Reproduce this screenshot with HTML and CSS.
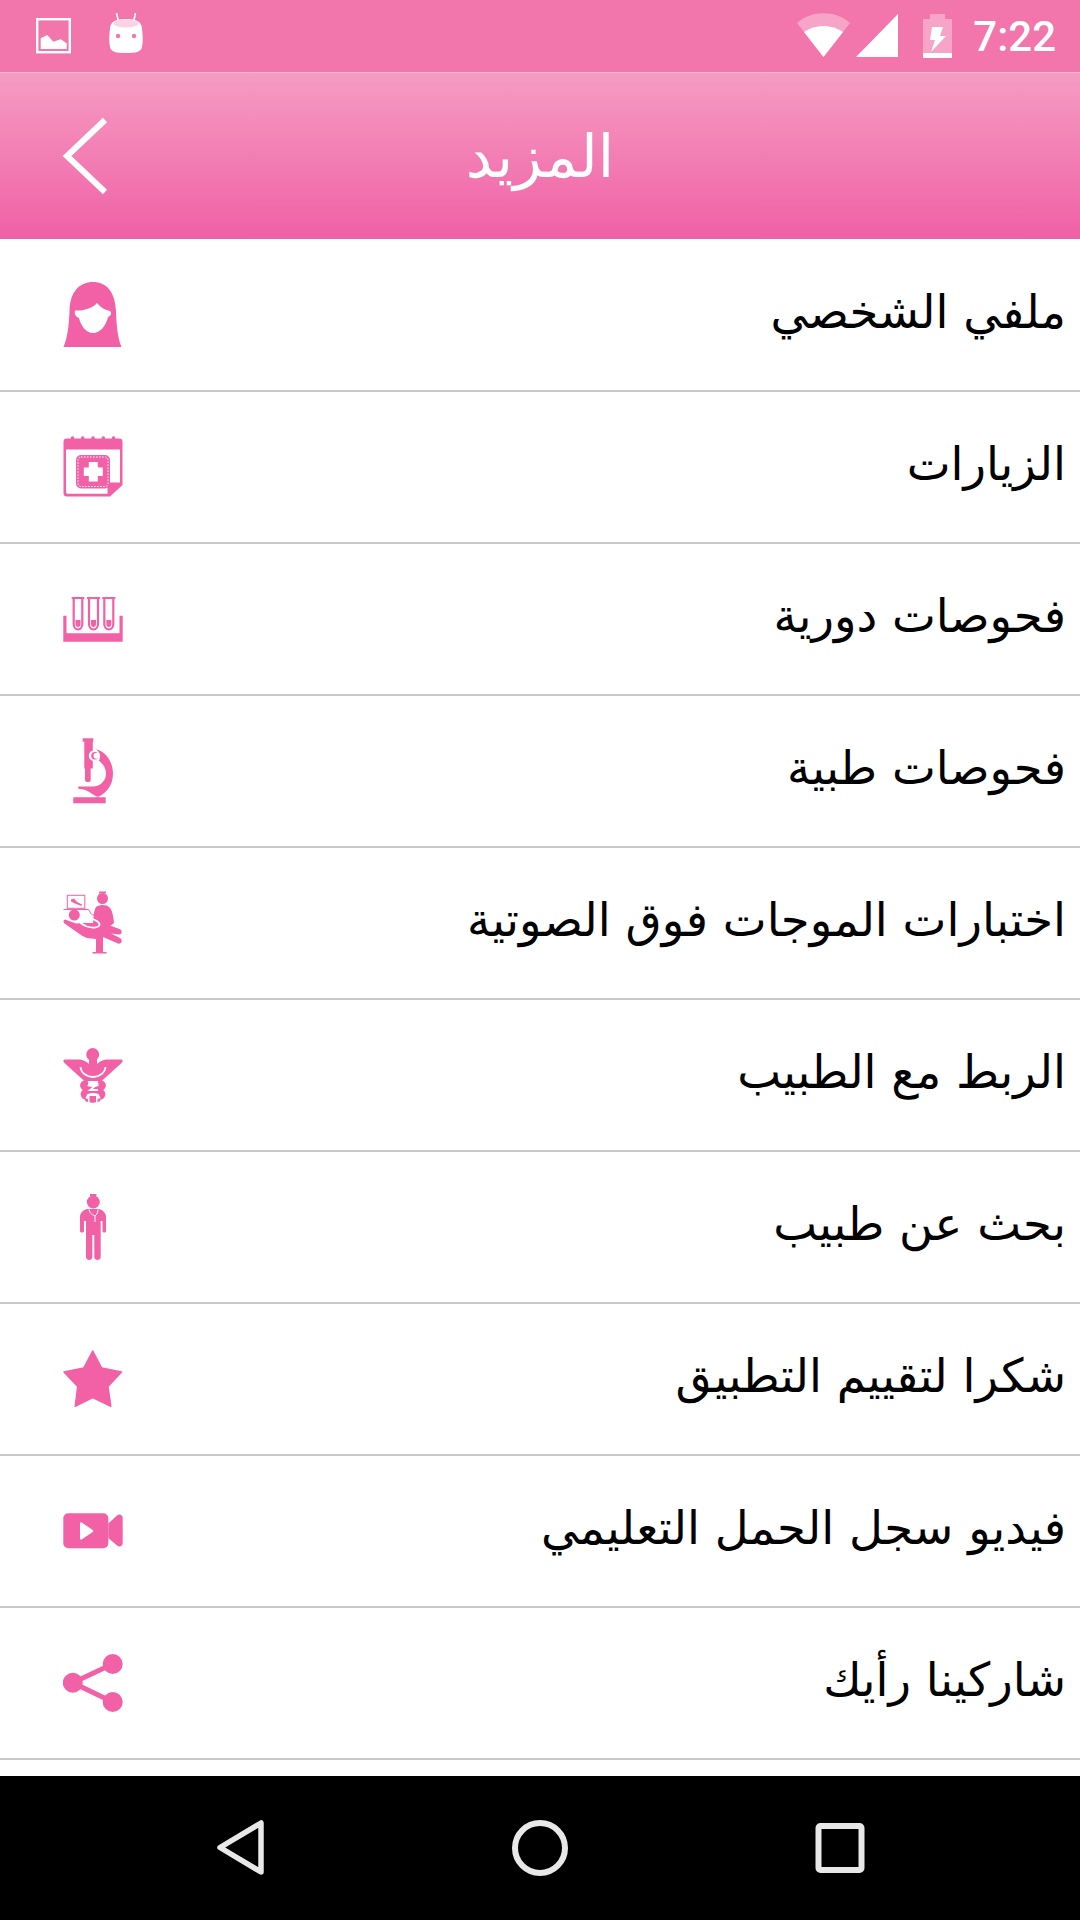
FILE: index.html
```html
<!DOCTYPE html>
<html lang="ar">

<head>
    <meta charset="UTF-8">
    <meta name="viewport" content="width=device-width, initial-scale=1.0">
    <title>المزيد</title>
    <link rel="stylesheet" href="styles.css">
</head>

<body>
    <div class="phone">
        <div class="status-bar">
            <svg class="st-picture" viewBox="0 0 35 72">
                <rect x="1.2" y="19.2" width="32.6" height="33" fill="none" stroke="#fff" stroke-width="2.4" />
                <path d="M4.700 49V38.300L11.300 35L17.300 41.700L24.700 39.300L30.700 43.300V49Z" fill="#fff" />
            </svg>
            <svg class="st-robot" viewBox="0 0 34 72">
                <path d="M7.500 13L9.500 22M26.500 13L24.500 22" stroke="#fff" stroke-width="1.600" fill="none" />
                <path d="M1 29C1 21 8 19 17 19C26 19 33 21 33 29C34 36 34 42 33 47C32 52 27 53 17 53C7 53 2 52 1 47C0 42 0 36 1 29Z" fill="#fff" />
                <ellipse cx="17" cy="23.500" rx="12.500" ry="4" fill="#fbd3e5" />
                <circle cx="9" cy="36" r="2.200" fill="#f275ab" />
                <circle cx="25" cy="36" r="2.200" fill="#f275ab" />
            </svg>
            <svg class="st-wifi" viewBox="0 0 53 72">
                <path d="M0 23C14 10 39 10 53 23L26.500 57Z" fill="#fff" fill-opacity="0.35" />
                <path d="M7 32C18 24 35 24 46 32L26.500 57Z" fill="#fff" />
            </svg>
            <svg class="st-signal" viewBox="0 0 42 72">
                <path d="M0 57L42 14V57Z" fill="#fff" />
            </svg>
            <svg class="st-battery" viewBox="0 0 29 72">
                <path d="M7 19V14H22V19H29V58H0V19Z" fill="#fff" fill-opacity="0.35" />
                <rect x="0" y="53" width="29" height="5" fill="#fff" />
                <path d="M9 27H20L17 36H23L8 52L12 40H7Z" fill="#fff" />
            </svg>
            <span class="clock">7:22</span>
        </div>

        <header class="top-bar">
            <svg class="back-arrow" viewBox="0 0 50 80">
                <path d="M46 4L8 40L46 76" fill="none" stroke="#fff" stroke-width="6" />
            </svg>
            <h1 class="page-title">المزيد</h1>
        </header>

        <ul class="menu">
            <li class="menu-row">
                <span class="menu-label">ملفي الشخصي</span>
                <svg class="menu-icon" viewBox="0 0 60 76">
                    <path d="M0.500 70C4 62 6 50 6.500 34C7 14 17 5 30 5C43 5 52 14 53 34C53.500 50 55 62 58.500 70Z" />
                    <path d="M12 33.500C19 34 29 32 34 26C37 30 42 33 47 34C49 36 48 39 45 40C43 49 37 56 30 56C23 56 18 49 16 41C13 40 11 37 12 33.500Z" fill="#fff" />
                </svg>
            </li>
            <li class="menu-row">
                <span class="menu-label">الزيارات</span>
                <svg class="menu-icon" viewBox="0 0 60 76">
                    <path d="M4 9.500H56C58.500 9.500 59.500 10.500 59.500 13V56L47 67.500H4C1.500 67.500 0.500 66.500 0.500 64V13C0.500 10.500 1.500 9.500 4 9.500ZM3 20.500V62C3 64 3.500 64.800 5.500 64.800H44.500V53.500H57V20.500Z" />
                    <path d="M46.500 65V56H56.500Z" />
                    <circle cx="9.500" cy="9" r="1.800" />
                    <circle cx="19.700" cy="9" r="1.800" />
                    <circle cx="30" cy="9" r="1.800" />
                    <circle cx="40.300" cy="9" r="1.800" />
                    <circle cx="50.500" cy="9" r="1.800" />
                    <rect x="13" y="26" width="34" height="33.500" rx="5" />
                    <rect x="15" y="28" width="30" height="29.500" rx="3" class="white-line thin dashed" />
                    <path d="M25.800 33H34.800V38.500H39.800V47H34.800V52.500H25.800V47H20.800V38.500H25.800Z" fill="#fff" />
                </svg>
            </li>
            <li class="menu-row">
                <span class="menu-label">فحوصات دورية</span>
                <svg class="menu-icon" viewBox="0 0 60 76">
                    <path d="M0.300 34.700H3.500V52.300H56.500V34.700H59.700V60.700H0.300Z" />
                    <path class="pink-line" d="M8.700 17H21.300M10.700 17V43C10.700 46 12.500 48.500 15 48.500C17.500 48.500 19.300 46 19.300 43V17" />
                    <path class="pink-line" d="M24 17H37M26 17V43C26 46 27.800 48.500 30.500 48.500C33 48.500 35 46 35 43V17" />
                    <path class="pink-line" d="M39.300 17H52.300M41.300 17V43C41.300 46 43.100 48.500 45.800 48.500C48.300 48.500 50.300 46 50.300 43V17" />
                    <path d="M12.500 39H17.500V43C17.500 45 16.500 46 15 46C13.500 46 12.500 45 12.500 43Z" />
                    <path d="M28 39H33V43C33 45 32 46 30.500 46C29 46 28 45 28 43Z" />
                    <path d="M43.300 39H48.300V43C48.300 45 47.300 46 45.800 46C44.300 46 43.300 45 43.300 43Z" />
                </svg>
            </li>
            <li class="menu-row">
                <span class="menu-label">فحوصات طبية</span>
                <svg class="menu-icon" viewBox="0 0 60 76">
                    <path d="M19.700 5.300H30.300V8.700H29.800V35.500H27.700V47C27.700 48.500 26.500 49 25 49C23.500 49 22 48.500 22 47V35.500H21.300V8.700H19.700Z" />
                    <path d="M33 16.500C42 18 50 28 50 41C50 53 42 62 33 64.300H10.300V70.300H42.700V64.300H36C28 62 27 56.500 15.300 55.800V53.500H31C38 53 43 47 43 41C43 34 39 30 36 28C38 23 37 19 33 16.500Z" />
                    <circle cx="31.300" cy="22.700" r="5.500" fill="#fff" />
                    <circle cx="32" cy="22.700" r="3.800" />
                    <circle cx="33.500" cy="22.700" r="3" fill="#fff" />
                </svg>
            </li>
            <li class="menu-row">
                <span class="menu-label">اختبارات الموجات فوق الصوتية</span>
                <svg class="menu-icon" viewBox="0 0 60 76">
                    <rect x="4.300" y="10.300" width="17.500" height="13" class="pink-line thin" />
                    <path d="M8 14.500L11 13.500L14 17L19 19.500L18.500 21L12 18.500L8 16.500Z" />
                    <path class="pink-line thin" d="M0.500 24.500H24C28 24 26 30 31 30" />
                    <circle cx="39.500" cy="13.500" r="5.500" />
                    <path d="M36 6.500H43V8.500H36Z" />
                    <path d="M33 22C38 19 44 20 46 22C49 24 50.500 31 51 38L46 42H30C30 33 31 25 33 22Z" />
                    <circle cx="11.300" cy="30" r="5.500" />
                    <path d="M2 34.500C0 35 0 37 1.500 38.500L18 50C22 53 26 53.500 33 54V67H29.500V68.500H43.500V67H40V52L55 58.500C59 59.500 60 54.500 57 53L48 48.500L56 49.500C59.500 49.500 59.500 45 56.500 44L40 38H19L13 38.500Z" />
                    <path class="white-line" d="M19 33.500C24 31 35 35 36.500 39C37 42.500 30 43.500 24 41.500C20 40 15.500 37 16 35C16.500 34 17.500 34 19 33.500Z" />
                </svg>
            </li>
            <li class="menu-row">
                <span class="menu-label">الربط مع الطبيب</span>
                <svg class="menu-icon" viewBox="0 0 60 76">
                    <circle cx="29.700" cy="17.500" r="6.500" />
                    <path d="M1.500 22.500H17C21 23 24 25 26 27V22H34V27C36 25 39 23 43 22.500H58.500C60 22.500 60 25 58.500 26L42 41C40 43 38 44 36 44H24C22 44 20 43 18 41L1.500 26C0 25 0 22.500 1.500 22.500Z" />
                    <path class="white-line" d="M17.500 30C18 36 24 40 30 40C36 40 42 36 42.500 30" />
                    <path class="pink-line coil" d="M25 45C17 47 19 52 30 53C41 54 41 58 37 60" />
                    <path class="pink-line coil" d="M35 45C43 47 41 52 30 53C19 54 19 58 23 60" />
                    <path class="white-line" d="M25 47.500H34L27 53H35" />
                    <path d="M26.500 59H33V65C33 66 26.500 66 26.500 65Z" />
                    <path d="M21.500 61L25 62V65C23 65 22 64 21.500 61Z" />
                    <path d="M38 61L34.500 62V65C36.500 65 37.500 64 38 61Z" />
                </svg>
            </li>
            <li class="menu-row">
                <span class="menu-label">بحث عن طبيب</span>
                <svg class="menu-icon" viewBox="0 0 60 76">
                    <circle cx="30.300" cy="13" r="6.500" />
                    <path d="M27 5H33.500V7H27Z" />
                    <path d="M24 20H36C40 21 43 24 43 28V42C43 44 39.500 44 39.500 42V32H37.700V68C37.700 72 31.300 72 31.300 68V46H29.300V68C29.300 72 23 72 23 68V32H21V42C21 44 17 44 17 42V28C17 24 20 21 24 20Z" />
                    <path class="white-line thin" d="M26 20.500C27 25 30 26 32 27C34 25.500 35 23 35 20.500M32 27V33" />
                </svg>
            </li>
            <li class="menu-row">
                <span class="menu-label">شكرا لتقييم التطبيق</span>
                <svg class="menu-icon" viewBox="0 0 60 76">
                    <path class="star" d="M29.700 10L38.700 27L58.500 31L45 45.500L47.800 65.300L29.700 56.500L12.200 65.300L14.700 45.500L1 31L20.700 27Z" />
                </svg>
            </li>
            <li class="menu-row">
                <span class="menu-label">فيديو سجل الحمل التعليمي</span>
                <svg class="menu-icon" viewBox="0 0 60 76">
                    <rect x="0.300" y="20.300" width="45" height="35" rx="5" />
                    <path d="M45.300 30.500L54 22.500C56.500 20.500 59.700 22 59.700 25V50C59.700 53 56.500 54.500 54 52.500L45.300 45Z" />
                    <path d="M17 30.500C17 29.500 18 29 19 29.700L29.700 37C30.500 37.700 30.500 38.300 29.700 39L19 46.300C18 47 17 46.500 17 45.500Z" fill="#fff" />
                </svg>
            </li>
            <li class="menu-row">
                <span class="menu-label">شاركينا رأيك</span>
                <svg class="menu-icon" viewBox="0 0 60 76">
                    <circle cx="49.700" cy="19" r="10" />
                    <circle cx="9.800" cy="37.700" r="10" />
                    <circle cx="49.700" cy="57" r="10" />
                    <path class="pink-line share" d="M49.700 19L9.800 37.700L49.700 57" />
                </svg>
            </li>
        </ul>

        <div class="nav-bar">
            <svg class="nav-icon" viewBox="0 0 60 60">
                <path d="M10 29.500L51 5V54Z" fill="none" stroke="#e8e8e8" stroke-width="5.500" stroke-linejoin="round" />
            </svg>
            <svg class="nav-icon" viewBox="0 0 60 60">
                <circle cx="30" cy="30" r="25" fill="none" stroke="#e8e8e8" stroke-width="6" />
            </svg>
            <svg class="nav-icon" viewBox="0 0 60 60">
                <rect x="8.500" y="8" width="43" height="44" rx="2" fill="none" stroke="#e8e8e8" stroke-width="6" />
            </svg>
        </div>
    </div>
</body>

</html>
```

FILE: styles.css
```css
* {
    box-sizing: border-box;
}

body {
    margin: 0;
    background-color: #fff;
}

.phone {
    width: 1080px;
    height: 1920px;
    display: flex;
    flex-direction: column;
    overflow: hidden;
}

.status-bar {
    height: 72px;
    flex-shrink: 0;
    display: flex;
    align-items: center;
    padding: 0 24px 0 36px;
    background-color: #f275ab;
}

.status-bar svg {
    height: 72px;
    flex-shrink: 0;
}

.st-picture {
    width: 35px;
}

.st-robot {
    width: 34px;
    margin-left: 38px;
}

.st-wifi {
    width: 53px;
    margin-left: auto;
}

.st-signal {
    width: 42px;
    margin-left: 6px;
}

.st-battery {
    width: 29px;
    margin-left: 25px;
}

.clock {
    margin-left: 21px;
    font-family: Roboto, sans-serif;
    font-size: 42px;
    font-weight: 500;
    color: #fff;
}

.top-bar {
    height: 167px;
    flex-shrink: 0;
    display: grid;
    grid-template-columns: 1fr auto 1fr;
    align-items: center;
    padding-left: 59px;
    border-top: 1px solid #f9b3d2;
    background: linear-gradient(#f59cc3, #f060a5);
}

.back-arrow {
    width: 50px;
    height: 80px;
}

.page-title {
    margin: 0 0 0 -59px;
    font-family: "DejaVu Sans", sans-serif;
    font-size: 59px;
    font-weight: normal;
    color: #fff;
}

.menu {
    flex: 1;
    min-height: 0;
    overflow: hidden;
    margin: 0;
    padding: 1px 0 0;
    list-style: none;
}

.menu-row {
    height: 152px;
    display: flex;
    direction: rtl;
    align-items: center;
    justify-content: space-between;
    padding: 0 14px 0 63px;
    border-bottom: 2px solid #c8c8c8;
}

.menu-label {
    margin-bottom: 6px;
    font-family: "DejaVu Sans", sans-serif;
    font-size: 46.6px;
    color: #000;
}

.menu-icon {
    width: 60px;
    height: 76px;
    fill: #f261a6;
}

.pink-line {
    fill: none;
    stroke: #f261a6;
    stroke-width: 2.200;
}

.white-line {
    fill: none;
    stroke: #fff;
    stroke-width: 1.800;
}

.thin {
    stroke-width: 1;
}

.dashed {
    stroke-dasharray: 1.500 1.500;
}

.coil {
    stroke-width: 6;
}

.share {
    stroke-width: 5;
}

.star {
    stroke: #f261a6;
    stroke-width: 1.500;
    stroke-linejoin: round;
}

.nav-bar {
    height: 144px;
    flex-shrink: 0;
    display: flex;
    align-items: center;
    justify-content: center;
    gap: 240px;
    background-color: #000;
}

.nav-icon {
    width: 60px;
    height: 60px;
}
```
